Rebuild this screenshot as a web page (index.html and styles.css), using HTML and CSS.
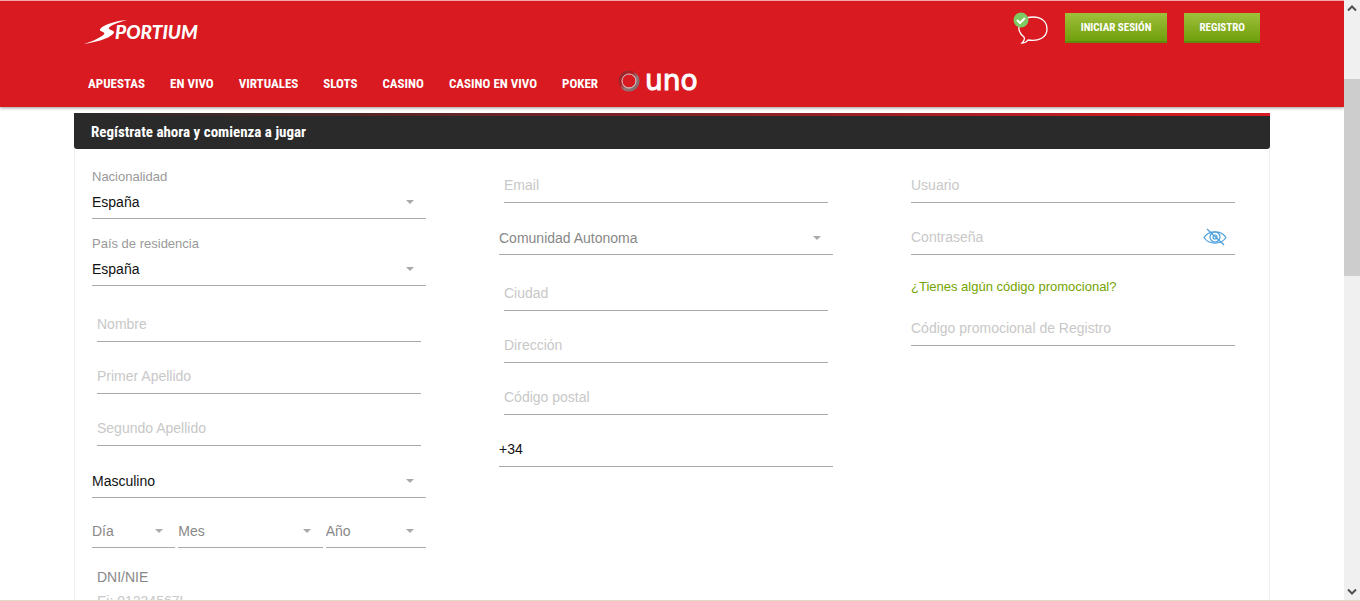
FILE: index.html
```html
<!DOCTYPE html>
<html lang="es">
<head>
    <meta charset="utf-8">
    <title>Sportium - Registro</title>
    <link rel="stylesheet" href="styles.css">
</head>
<body>
    <div class="page">

        <header class="header">
            <div class="container">
                <div class="top">
                    <a class="logo" href="#">
                        <svg width="31" height="26" viewBox="0 0 31 26">
                            <path d="M43 1 C31 2 22 5 17 9 C15 11 16 12 19 13 C21 14 21 15 18 17 C13 20 7 23 0 25 C12 23 24 20 29 15 C31 13 30 12 27 11 C24 10 24 9 27 7 C30 5 36 3 43 1Z" fill="#fff"/>
                        </svg>
                        <span>PORTIUM</span>
                    </a>
                    <div class="actions">
                        <a class="chat" href="#" aria-label="Chat">
                            <svg width="36" height="34" viewBox="0 0 36 34">
                                <path d="M11 25 C2 18 5 5 20 5 C29 5 34 10 34 17 C34 25 26 30 15 28 C13 31 11 31 9 31 C11 29 12 27 11 25Z" fill="none" stroke="#fff" stroke-width="1.3"/>
                                <circle cx="8" cy="8" r="7.5" fill="#7dca62"/>
                                <path d="M4 8 L7 11 L12 6" fill="none" stroke="#fff" stroke-width="2"/>
                            </svg>
                        </a>
                        <button class="btn" type="button">INICIAR SESIÓN</button>
                        <button class="btn" type="button">REGISTRO</button>
                    </div>
                </div>
                <nav class="nav">
                    <a href="#">APUESTAS</a>
                    <a href="#">EN VIVO</a>
                    <a href="#">VIRTUALES</a>
                    <a href="#">SLOTS</a>
                    <a href="#">CASINO</a>
                    <a href="#">CASINO EN VIVO</a>
                    <a href="#">POKER</a>
                    <a class="uno" href="#">
                        <svg width="22" height="22" viewBox="0 0 22 22">
                            <defs>
                                <linearGradient id="ring" x1="0" y1="0" x2="1" y2="1">
                                    <stop offset="0" stop-color="#8a3034"/>
                                    <stop offset="0.35" stop-color="#b01c20"/>
                                    <stop offset="0.6" stop-color="#94787a"/>
                                    <stop offset="1" stop-color="#7d6668"/>
                                </linearGradient>
                            </defs>
                            <circle cx="11" cy="11" r="8.5" fill="none" stroke="url(#ring)" stroke-width="4"/>
                            <circle cx="11" cy="11" r="7" fill="none" stroke="#e8c4c5" stroke-width="1"/>
                        </svg>
                        <span>uno</span>
                    </a>
                </nav>
            </div>
        </header>

        <main class="container">
            <h1 class="title">Regístrate ahora y comienza a jugar</h1>

            <form class="form">
                <div class="column first">
                    <div class="field">
                        <label for="nacionalidad">Nacionalidad</label>
                        <div class="select"><select id="nacionalidad"><option>España</option></select></div>
                    </div>
                    <div class="field">
                        <label for="pais">País de residencia</label>
                        <div class="select"><select id="pais"><option>España</option></select></div>
                    </div>
                    <div class="field inset after-select"><input type="text" placeholder="Nombre" aria-label="Nombre"></div>
                    <div class="field inset"><input type="text" placeholder="Primer Apellido" aria-label="Primer Apellido"></div>
                    <div class="field inset"><input type="text" placeholder="Segundo Apellido" aria-label="Segundo Apellido"></div>
                    <div class="field">
                        <div class="select"><select aria-label="Sexo"><option>Masculino</option></select></div>
                    </div>
                    <div class="field date">
                        <div class="select empty"><select aria-label="Día"><option>Día</option></select></div>
                        <div class="select empty"><select aria-label="Mes"><option>Mes</option></select></div>
                        <div class="select empty"><select aria-label="Año"><option>Año</option></select></div>
                    </div>
                    <div class="field inset after-select">
                        <label class="dni" for="dni">DNI/NIE</label>
                        <input type="text" id="dni" placeholder="Ej: 01234567L">
                    </div>
                </div>

                <div class="column">
                    <div class="field inset"><input type="email" placeholder="Email" aria-label="Email"></div>
                    <div class="field">
                        <div class="select empty"><select aria-label="Comunidad Autonoma"><option>Comunidad Autonoma</option></select></div>
                    </div>
                    <div class="field inset after-select"><input type="text" placeholder="Ciudad" aria-label="Ciudad"></div>
                    <div class="field inset"><input type="text" placeholder="Dirección" aria-label="Dirección"></div>
                    <div class="field inset"><input type="text" placeholder="Código postal" aria-label="Código postal"></div>
                    <div class="field"><input type="tel" value="+34" aria-label="Teléfono"></div>
                </div>

                <div class="column">
                    <div class="field inset"><input type="text" placeholder="Usuario" aria-label="Usuario"></div>
                    <div class="field inset password">
                        <input type="password" placeholder="Contraseña" aria-label="Contraseña">
                        <button class="eye" type="button" aria-label="Mostrar contraseña">
                            <svg width="24" height="18" viewBox="0 0 24 18">
                                <g fill="none" stroke="#4a9fdc" stroke-width="1.2">
                                    <path d="M1 9.500 C6 2 18 2 23 9.500 C18 17 6 17 1 9.500Z"/>
                                    <circle cx="12" cy="9" r="5"/>
                                    <circle cx="12" cy="9" r="2"/>
                                    <path d="M4 1 L21 17"/>
                                </g>
                            </svg>
                        </button>
                    </div>
                    <a class="promo" href="#">¿Tienes algún código promocional?</a>
                    <div class="field inset"><input type="text" placeholder="Código promocional de Registro" aria-label="Código promocional de Registro"></div>
                </div>
            </form>
        </main>
    </div>

    <div class="scrollbar">
        <svg width="10" height="7" viewBox="0 0 10 7"><path d="M1 5.500 L5 1.500 L9 5.500" fill="none" stroke="#505050" stroke-width="2"/></svg>
        <div class="track"><div class="thumb"></div></div>
        <svg width="10" height="7" viewBox="0 0 10 7"><path d="M1 1.500 L5 5.500 L9 1.500" fill="none" stroke="#505050" stroke-width="2"/></svg>
    </div>
</body>
</html>
```
FILE: styles.css
```css
*{
    box-sizing: border-box;
}

body{
    margin: 0;
    display: flex;
    height: 100vh;
    overflow: hidden;
    background-color: #fff;
    border-bottom: 1px solid #dcdcc4;
    font-family: "Liberation Sans", Arial, sans-serif;
    font-size: 14px;
}

a{
    text-decoration: none;
}

.page{
    flex: 1;
    overflow: hidden;
}

.container{
    max-width: 1196px;
    margin: 0 auto;
}

/* header */

.header{
    height: 107px;
    background-color: #d91a21;
    border-top: 1px solid #f3a5a8;
    box-shadow: 0 1px 3px rgba(0, 0, 0, 0.4);
}

.top{
    display: flex;
    justify-content: space-between;
    align-items: flex-start;
    padding: 11px 10px 0;
}

.logo{
    display: flex;
    align-items: center;
    padding-top: 7px;
    color: #fff;
    font: italic 900 19px/26px Lato, sans-serif;
}

.logo svg{
    overflow: visible;
}

.actions{
    display: flex;
}

.chat{
    margin-right: 16px;
}

.btn{
    height: 30px;
    margin: 1px 0 0 17px;
    padding: 0 15px;
    border: 0;
    border-bottom: 2px solid #5f8a0c;
    background: linear-gradient(#a0c03c, #6f9f0c);
    color: #fff;
    font: bold 11px "Roboto Condensed", "Liberation Sans Narrow", sans-serif;
}

.actions .chat + .btn{
    margin-left: 0;
    padding: 0 16px;
}

.nav{
    display: flex;
    align-items: center;
    gap: 25px;
    padding: 16px 14px 0;
}

.nav a{
    color: #fff;
    font: bold 13px/32px "Roboto Condensed", "Liberation Sans Narrow", sans-serif;
}

.nav .uno{
    display: flex;
    align-items: center;
    gap: 5px;
    margin-left: -5px;
    padding-bottom: 6px;
    font: 28px/32px "DejaVu Sans", sans-serif;
    -webkit-text-stroke: 1px #fff;
}

/* form */

.title{
    margin: 6px 0 0;
    padding: 0 17px;
    border-top: 3px solid;
    border-image: linear-gradient(to right, #2a2a2a, #d91a21) 1;
    border-radius: 3px;
    background-color: #2a2a2a;
    color: #fff;
    font: bold 15px/33px "Roboto Condensed", "Liberation Sans Narrow", sans-serif;
}

.form{
    display: grid;
    grid-template-columns: 1fr 1fr 1fr;
    gap: 73px;
    padding: 2px 29px 40px 17px;
    border: solid #f0f0f0;
    border-width: 0 1px;
}

.first{
    padding-top: 1px;
}

.field{
    padding-top: 18px;
}

.inset{
    margin: 0 5px;
}

.after-select{
    padding-top: 22px;
}

label{
    display: block;
    margin-top: -1px;
    color: #999;
    font-size: 13px;
    line-height: 16px;
}

.dni{
    color: #888;
    font-size: 14px;
}

input, select{
    display: block;
    width: 100%;
    height: 34px;
    margin: 0;
    padding: 0;
    border: 0;
    border-bottom: 1px solid #aaa;
    border-radius: 0;
    outline: 0;
    appearance: none;
    background: transparent;
    color: #111;
    font: inherit;
}

input{
    padding-bottom: 1px;
}

input::placeholder{
    color: #c8c8c8;
}

.select{
    position: relative;
}

.select::after{
    content: "";
    position: absolute;
    top: 15px;
    right: 12px;
    border: 4px solid transparent;
    border-top-color: #aaa;
    border-bottom: 0;
    pointer-events: none;
}

.empty select{
    color: #888;
}

.date{
    display: grid;
    grid-template-columns: 83fr 144fr 100fr;
    gap: 3px;
    padding-top: 16px;
}

.password{
    position: relative;
}

.eye{
    position: absolute;
    right: 8px;
    bottom: 9px;
    padding: 0;
    border: 0;
    background: none;
    line-height: 0;
}

.promo{
    display: block;
    margin: 25px 5px 0;
    color: #74a400;
    font-size: 13px;
    line-height: 14px;
}

/* scrollbar */

.scrollbar{
    display: flex;
    flex-direction: column;
    align-items: center;
    gap: 5px;
    width: 16px;
    padding: 5px 0;
    background-color: #f0f0f0;
}

.track{
    flex: 1;
    width: 100%;
    padding-top: 62px;
}

.thumb{
    height: 39%;
    background-color: #cdcdcd;
}
```
